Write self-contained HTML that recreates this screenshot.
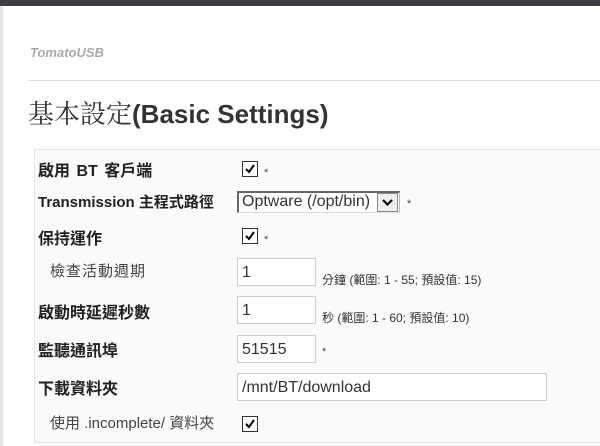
<!DOCTYPE html><html><head><meta charset="utf-8"><style>
body{margin:0;width:600px;height:446px;overflow:hidden;background:#fff;position:relative;font-family:"Liberation Sans","Noto Sans CJK TC",sans-serif;color:#222}
.a{position:absolute}
.l{position:absolute;left:38px;font-size:16px;font-weight:bold;color:#222}
.n{font-weight:normal;left:50px;font-size:15px;color:#444}
.cb{position:absolute;left:242px;width:14px;height:14px;border:1px solid #333;background:#fff}
.cb svg{position:absolute;left:1px;top:1px}
.st{position:absolute;font-size:11px;color:#444}
.in{position:absolute;left:237px;height:28px;border:1px solid #ccc;background:#fff;font-size:16px;line-height:27px;padding-left:4px;box-sizing:border-box;color:#333}
.h{position:absolute;left:322px;font-size:12px;color:#333}
</style></head><body>
<div class="a" style="left:0;top:0;width:600px;height:6px;background:#3a3d42"></div>
<div class="a" style="left:0;top:6px;width:3px;height:440px;background:#e6e6e6"></div>
<div class="a" style="left:30px;top:45px;font-size:13px;font-style:italic;font-weight:bold;color:#aaa">TomatoUSB</div>
<div class="a" style="left:28px;top:80px;width:572px;height:1px;background:#ddd"></div>
<div class="a" style="left:28px;top:94px;font-size:26px;color:#333;font-family:'Liberation Serif','Noto Serif CJK SC',serif">基本設定<b style="font-family:'Liberation Sans',sans-serif">(Basic Settings)</b></div>
<div class="a" style="left:34px;top:149px;width:570px;height:292px;border:1px solid #e4e4e4;background:#fafafa"></div>
<div class="l" style="top:157px;word-spacing:2px">啟用 BT 客戶端</div>
<div class="l" style="top:191px;font-size:15px">Transmission 主程式路徑</div>
<div class="l" style="top:225px">保持運作</div>
<div class="l n" style="top:260px;letter-spacing:1px">檢查活動週期</div>
<div class="l" style="top:299px">啟動時延遲秒數</div>
<div class="l" style="top:337px">監聽通訊埠</div>
<div class="l" style="top:375px">下載資料夾</div>
<div class="l n" style="top:412px">使用 .incomplete/ 資料夾</div>
<div class="cb" style="top:161px"><svg width="12" height="12"><path d="M2 6l3 3 5-7" stroke="#000" stroke-width="2" fill="none"/></svg></div>
<div class="st" style="left:264px;top:167px">*</div>
<div class="a" style="left:237px;top:191px;width:163px;height:22px;border:2px solid #666;border-right:1px solid #bbb;border-bottom:1px solid #ddd;box-sizing:border-box;background:#fff;font-size:16px;line-height:18px;padding-left:3px;color:#333;white-space:nowrap">Optware (/opt/bin)</div>
<div class="a" style="left:377px;top:193px;width:21px;height:19px;background:#eee;border:1px solid #888;box-sizing:border-box"><svg width="19" height="17"><path d="M5 6l4.5 4.5L14 6" stroke="#000" stroke-width="2.2" fill="none"/></svg></div>
<div class="st" style="left:407px;top:198px">*</div>
<div class="cb" style="top:228px"><svg width="12" height="12"><path d="M2 6l3 3 5-7" stroke="#000" stroke-width="2" fill="none"/></svg></div>
<div class="st" style="left:264px;top:234px">*</div>
<div class="in" style="top:258px;width:79px">1</div>
<div class="h" style="top:271px">分鐘 (範圍: 1 - 55; 預設值: 15)</div>
<div class="in" style="top:296px;width:79px">1</div>
<div class="h" style="top:309px">秒 (範圍: 1 - 60; 預設值: 10)</div>
<div class="in" style="top:335px;width:79px">51515</div>
<div class="st" style="left:322px;top:346px">*</div>
<div class="in" style="top:373px;width:310px">/mnt/BT/download</div>
<div class="cb" style="top:416px"><svg width="12" height="12"><path d="M2 6l3 3 5-7" stroke="#000" stroke-width="2" fill="none"/></svg></div>
</body></html>
